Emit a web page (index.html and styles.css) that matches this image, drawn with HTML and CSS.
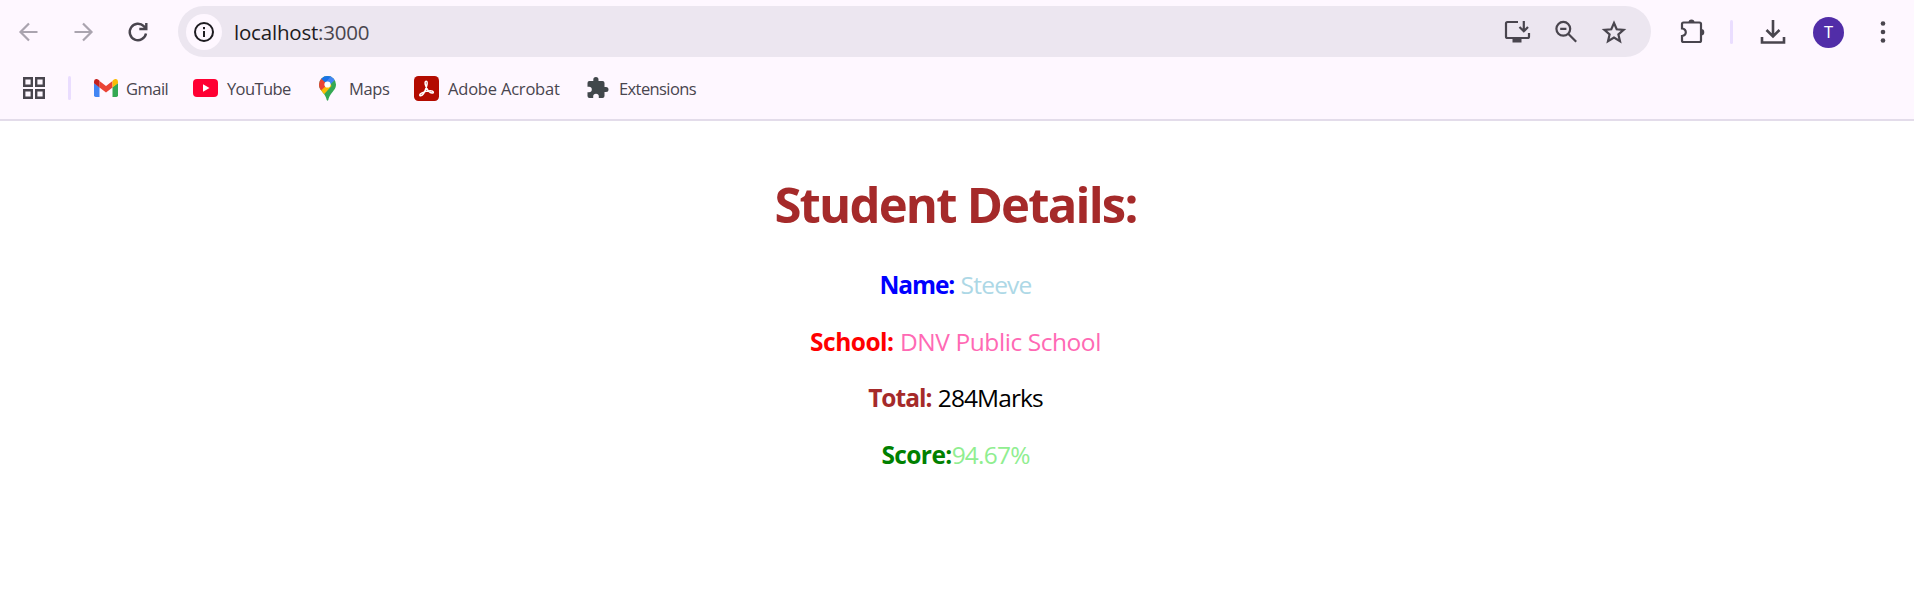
FILE: index.html
```html
<!DOCTYPE html>
<html lang="en">
<head>
<meta charset="utf-8">
<title>Student Details</title>
<link rel="stylesheet" href="styles.css">
</head>
<body>
<header class="chrome">
  <div class="toolbar">
    <svg class="icon back" viewBox="0 0 24 24"><path d="M20.500 12H4M12 3.500L3.500 12l8.500 8.500" /></svg>
    <svg class="icon forward" viewBox="0 0 24 24"><path d="M2.500 12H19M11 3.500l8.500 8.500-8.500 8.500" /></svg>
    <svg class="icon reload" viewBox="0 0 24 24"><path d="M20 13.500A8.200 8.200 0 1 1 17.800 6.200L20 8.300M20.300 3v6h-7" /></svg>
    <div class="address">
      <span class="site"><svg viewBox="0 0 24 24"><circle cx="12" cy="12" r="9"/><path d="M12 11v6M12 7v2.200"/></svg></span>
      <span class="url"><span class="host">localhost</span><span class="port">:3000</span></span>
      <svg class="omni install" viewBox="0 0 26 24"><path d="M14 2H3.500Q2 2 2 3.500v13Q2 18 3.500 18h20Q25 18 25 16.500V13M19.800 1v10M15.500 7l4.300 4.300L24 7"/><path class="solid" d="M8.500 18h9v4.500h-9z"/></svg>
      <svg class="omni search" viewBox="0 0 24 24"><circle cx="9.300" cy="8.800" r="6.900"/><path d="M14.200 13.800l8 8M6.200 8.800h6.200"/></svg>
      <svg class="omni star" viewBox="0 0 24 24"><path d="M12 3l2.700 6.300 6.900.6-5.200 4.500 1.600 6.800-6-3.600-6 3.600 1.600-6.800-5.200-4.500 6.900-.6z"/></svg>
    </div>
    <svg class="icon ext" viewBox="0 0 26 26"><path d="M3 5Q3 3.500 4.500 3.500h16Q22 3.500 22 5v16.500Q22 23 20.500 23h-16Q3 23 3 21.500V17q3.800-.5 3.800-3.700T3 9.500z"/><path class="solid" d="M9.500 3.500a3 3 0 0 1 6 0zM22 10a3.300 3.300 0 0 1 0 6.600z"/></svg>
    <span class="divider top"></span>
    <svg class="icon download" viewBox="0 0 26 26"><path d="M13 1v16M6.500 11l6.500 6.500 6.500-6.500M2 18v5.500h22V18"/></svg>
    <span class="avatar">T</span>
    <svg class="icon menu" viewBox="0 0 6 24"><circle cx="3" cy="3.500" r="2.300"/><circle cx="3" cy="12" r="2.300"/><circle cx="3" cy="20.500" r="2.300"/></svg>
  </div>
  <nav class="bookmarks">
    <svg class="apps" viewBox="0 0 22 22"><path d="M1.200 1.200h7.600v7.600H1.200zM13.200 1.200h7.600v7.600h-7.600zM1.200 13.200h7.600v7.600H1.200zM13.200 13.200h7.600v7.600h-7.600z"/></svg>
    <span class="divider"></span>
    <a class="mark gmail"><svg viewBox="0 0 24 18"><path fill="#4285f4" d="M0 4l5.500 4v10H1.700Q0 18 0 16.300z"/><path fill="#34a853" d="M24 4l-5.500 4v10h3.800q1.700 0 1.700-1.700z"/><path fill="#ea4335" d="M5.500 2L12 7l6.500-5v6.500L12 13.500 5.500 8.500z"/><path fill="#c5221f" d="M5.500 1.700v6.800L0 4.300V2.500Q.1.500 2 .1T5.500 1.700z"/><path fill="#fbbc04" d="M18.500 1.700v6.800L24 4.300V2.500Q23.900.5 22 .1t-3.500 1.600z"/></svg><span>Gmail</span></a>
    <a class="mark youtube"><svg viewBox="0 0 25 18"><rect width="25" height="18" rx="4" fill="#ff0033"/><path fill="#fff" d="M10 5.200l6.500 3.800-6.500 3.800z"/></svg><span>YouTube</span></a>
    <a class="mark maps"><svg viewBox="0 0 17 25"><defs><clipPath id="pin"><path d="M8.500 0A8.500 8.500 0 0 1 17 8.500c0 4.500-3 6.500-5 9.500-1.800 2.500-2.200 4-2.700 6q-.8 1.500-1.600 0c-.5-2-.9-3.500-2.700-6-2-3-5-5-5-9.500A8.500 8.500 0 0 1 8.500 0z"/></clipPath></defs><g clip-path="url(#pin)"><path fill="#34a853" d="M0 0h17v25H0z"/><path fill="#fbbc04" d="M0 14.500L9 4l3.500 6L3.500 20H0z"/><path fill="#ea4335" d="M0 0l8.500 8.500L2 14.500H0z"/><path fill="#1a73e8" d="M2 2.500L8 8l5-8H2z"/><path fill="#4285f4" d="M12 0L5.500 8l3 3L17 3V0z"/></g><circle cx="8.500" cy="8.500" r="3.100" fill="#fff"/></svg><span>Maps</span></a>
    <a class="mark acrobat"><svg viewBox="0 0 25 25"><rect width="25" height="25" rx="4.500" fill="#b30b00"/><path class="ribbon" d="M12 10.500C10.500 7 11 5.200 12.200 5.200s1.300 2.200.3 5.300C11.500 14 9.200 19.500 6.800 19.800c-1.500.2-1.500-1.600.7-2.700 2.500-1.300 6-2.300 9-2.300 3.500 0 3.500 2.500 1.500 2.300-2.300-.3-4.800-3.600-6-6.600z"/></svg><span>Adobe Acrobat</span></a>
    <a class="mark extensions"><svg viewBox="0 0 22 22"><path fill="#41474b" d="M19 10h-1.500V6q0-2-2-2h-4V2.700a2.600 2.600 0 0 0-5.200 0V4h-4Q.5 4 .5 6v3.700H2a2.800 2.800 0 0 1 0 5.600H.5V19q0 2 2 2h3.700v-1.500a2.800 2.800 0 0 1 5.600 0V21h3.700q2 0 2-2v-4H19a2.500 2.500 0 0 0 0-5z"/></svg><span>Extensions</span></a>
  </nav>
</header>
<main class="student">
  <h1 class="title">Student Details:</h1>
  <p class="row"><b class="name-label">Name:</b> <span class="name-value">Steeve</span></p>
  <p class="row"><b class="school-label">School:</b> <span class="school-value">DNV Public School</span></p>
  <p class="row"><b class="total-label">Total:</b> <span class="total-value">284Marks</span></p>
  <p class="row"><b class="score-label">Score:</b><span class="score-value">94.67%</span></p>
</main>
</body>
</html>
```
FILE: styles.css
```css
* { box-sizing: border-box; }
body { margin: 0; background: #fff; font-family: "Open Sans", "Noto Sans", sans-serif; }
svg { display: block; flex: none; fill: none; stroke: #49454e; stroke-width: 2.2; overflow: visible; }
.chrome { height: 121px; background: #fef7ff; border-bottom: 2px solid #e3dcea; }
.toolbar { display: flex; align-items: center; height: 63px; padding-left: 17px; }
.icon { width: 24px; height: 24px; margin-top: 1px; }
.back, .forward { stroke: #aaa4af; }
.forward { margin-left: 31px; }
.reload { margin-left: 30px; stroke-width: 2.4; }
.address { display: flex; align-items: center; width: 1473px; height: 51px; margin-left: 28px; padding-left: 8px; border-radius: 26px; background: #ece6f0; }
.site { display: flex; align-items: center; justify-content: center; width: 36px; height: 36px; border-radius: 50%; background: #fef7ff; }
.site svg { width: 24px; height: 24px; stroke: #1d1b20; stroke-width: 2; }
.url { width: 1270px; margin-left: 12px; font-size: 20.5px; letter-spacing: -.2px; white-space: nowrap; }
.host { color: #1d1b20; }
.port { color: #49454e; }
.omni { width: 24px; height: 24px; margin-top: 1px; }
.install { width: 26px; }
.search { margin-left: 24px; }
.star { margin-left: 24px; }
.solid { fill: #49454e; stroke: none; }
.ext { width: 26px; height: 26px; margin-left: 28px; }
.divider { flex: none; width: 3px; height: 24px; border-radius: 2px; background: #eaddff; }
.top { margin-left: 25px; }
.download { width: 26px; height: 26px; margin-left: 27px; stroke-width: 2.6; }
.avatar { display: flex; align-items: center; justify-content: center; width: 31px; height: 31px; margin: 1px 0 0 27px; border-radius: 50%; background: #512da8; color: #fff; font: 16px Roboto, sans-serif; }
.menu { width: 6px; margin-left: 36px; fill: #49454e; stroke: none; }
.bookmarks { display: flex; align-items: center; height: 50px; padding-left: 23px; color: #49454e; font-size: 16.5px; }
.apps { width: 22px; height: 22px; margin-right: 23px; stroke-width: 2.4; }
.mark { display: flex; align-items: center; white-space: nowrap; }
.mark svg { stroke: none; }
.gmail { width: 99px; margin-left: 23px; gap: 8px; letter-spacing: -.5px; }
.gmail svg { width: 24px; height: 18px; }
.youtube { width: 126px; gap: 9px; letter-spacing: -.6px; }
.youtube svg { width: 25px; height: 18px; }
.maps { width: 95px; gap: 13px; letter-spacing: -.4px; }
.maps svg { width: 17px; height: 25px; }
.acrobat { width: 173px; gap: 9px; letter-spacing: -.2px; }
.acrobat svg { width: 25px; height: 25px; }
.mark .ribbon { stroke: #fff; stroke-width: 1.5; }
.extensions { gap: 10px; letter-spacing: -.6px; }
.extensions svg { width: 22px; height: 22px; }
.student { padding: 49px 3px 0 0; text-align: center; }
.title { margin: 0; color: #a52a2a; font-size: 49px; line-height: 68px; letter-spacing: -1.8px; }
.row { margin: 0 0 23.6px; font-size: 24.5px; line-height: 33px; white-space: nowrap; }
.title + .row { margin-top: 30px; }
.name-label { color: #00f; letter-spacing: -1.1px; }
.name-value { color: #add8e6; letter-spacing: -.8px; }
.school-label { color: #f00; letter-spacing: -.5px; }
.school-value { color: #ff69b4; letter-spacing: -.43px; }
.total-label { color: #a52a2a; letter-spacing: -1px; }
.total-value { color: #000; letter-spacing: -.9px; }
.score-label { color: #008000; letter-spacing: -.6px; }
.score-value { color: #90ee90; letter-spacing: -.8px; }
```
